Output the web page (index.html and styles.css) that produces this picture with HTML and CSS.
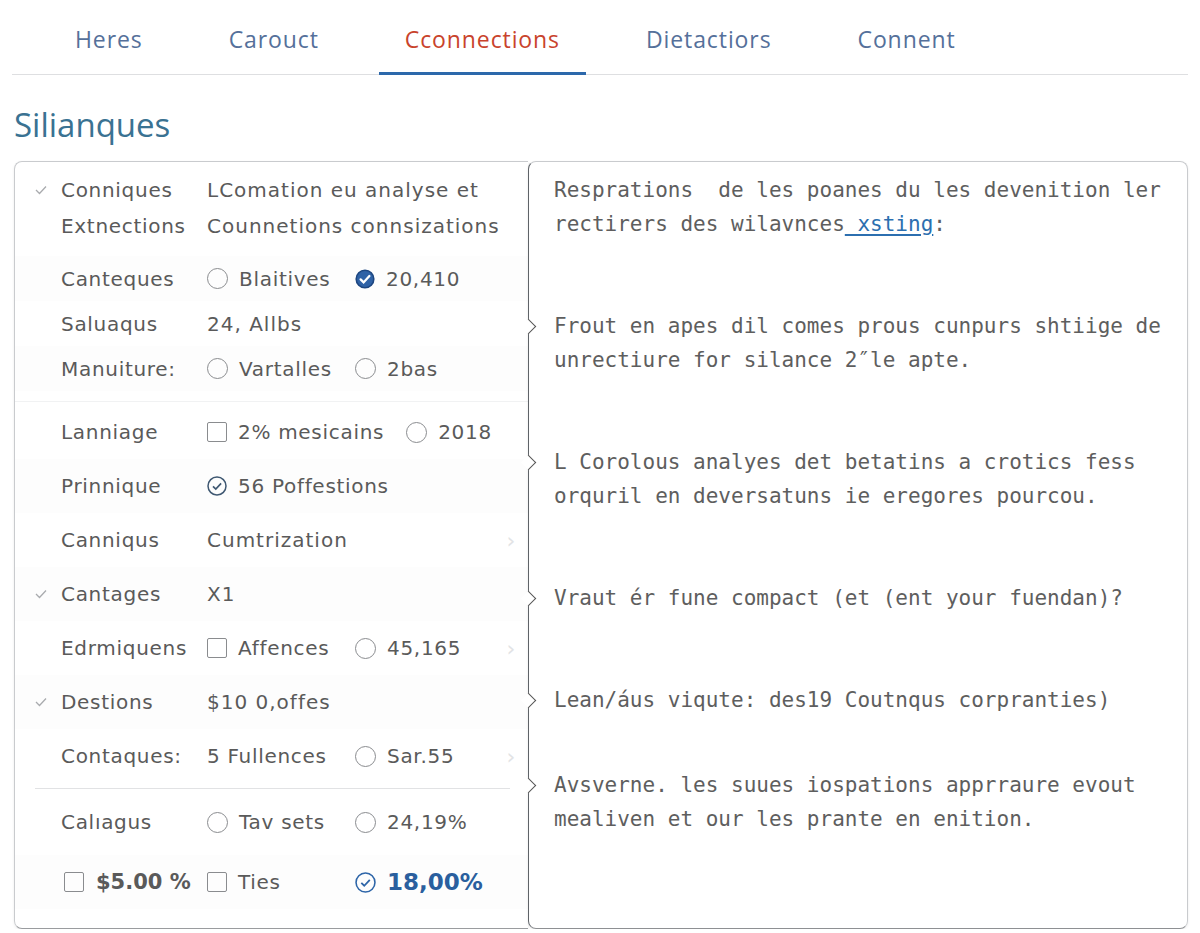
FILE: index.html
```html
<!DOCTYPE html>
<html lang="en">
<head>
    <meta charset="UTF-8">
    <meta name="viewport" content="width=device-width, initial-scale=1.0">
    <title>Silianques</title>
    <link rel="stylesheet" href="styles.css">
</head>
<body>
    <nav class="tabs">
        <a class="tab" href="#">Heres</a>
        <a class="tab" href="#">Carouct</a>
        <a class="tab active" href="#">Cconnections</a>
        <a class="tab" href="#">Dietactiors</a>
        <a class="tab" href="#">Connent</a>
    </nav>

    <main class="page">
        <h1 class="title">Silianques</h1>

        <div class="panels">
            <!-- left: settings list -->
            <section class="list">
                <div class="group first">
                    <div class="row two">
                        <span class="tick"><svg width="12" height="10" viewBox="0 0 12 10"><path d="M1 5l3.5 3.5L11 1.5"/></svg></span>
                        <span class="label">Conniques<br>Extnections</span>
                        <span class="value">LComation eu analyse et<br>Counnetions connsizations</span>
                    </div>
                    <div class="row">
                        <span class="tick"></span>
                        <span class="label">Canteques</span>
                        <span class="opts">
                            <span class="opt"><i class="radio"></i>Blaitives</span>
                            <span class="opt"><svg class="ico" width="20" height="20" viewBox="0 0 20 20"><circle cx="10" cy="10" r="8.8" fill="#2f62a6" stroke="#1d4680" stroke-width="1.6"/><path d="M5.6 10.4l3 3 5.8-6.4" stroke="#fff" stroke-width="2.3" fill="none" stroke-linecap="round"/></svg>20,410</span>
                        </span>
                    </div>
                    <div class="row">
                        <span class="tick"></span>
                        <span class="label">Saluaqus</span>
                        <span class="value">24, Allbs</span>
                    </div>
                    <div class="row">
                        <span class="tick"></span>
                        <span class="label">Manuiture:</span>
                        <span class="opts">
                            <span class="opt"><i class="radio"></i>Vartalles</span>
                            <span class="opt"><i class="radio"></i>2bas</span>
                        </span>
                    </div>
                </div>

                <div class="group">
                    <div class="row">
                        <span class="tick"></span>
                        <span class="label">Lanniage</span>
                        <span class="opts">
                            <span class="opt"><i class="box"></i>2% mesicains</span>
                            <span class="opt"><i class="radio"></i>2018</span>
                        </span>
                    </div>
                    <div class="row">
                        <span class="tick"></span>
                        <span class="label">Prinnique</span>
                        <span class="opts">
                            <span class="opt"><svg class="ico" width="20" height="20" viewBox="0 0 20 20"><circle cx="10" cy="10" r="9" fill="none" stroke="#3f5872" stroke-width="1.5"/><path d="M6 10.3l2.8 2.8 5.3-5.7" stroke="#3f5872" stroke-width="1.7" fill="none"/></svg>56 Poffestions</span>
                        </span>
                    </div>
                    <div class="row">
                        <span class="tick"></span>
                        <span class="label">Canniqus</span>
                        <span class="value">Cumtrization</span>
                        <span class="more">›</span>
                    </div>
                    <div class="row">
                        <span class="tick"><svg width="12" height="10" viewBox="0 0 12 10"><path d="M1 5l3.5 3.5L11 1.5"/></svg></span>
                        <span class="label">Cantages</span>
                        <span class="value">X1</span>
                    </div>
                    <div class="row">
                        <span class="tick"></span>
                        <span class="label">Edrmiquens</span>
                        <span class="opts">
                            <span class="opt"><i class="box"></i>Affences</span>
                            <span class="opt"><i class="radio"></i>45,165</span>
                        </span>
                        <span class="more">›</span>
                    </div>
                    <div class="row">
                        <span class="tick"><svg width="12" height="10" viewBox="0 0 12 10"><path d="M1 5l3.5 3.5L11 1.5"/></svg></span>
                        <span class="label">Destions</span>
                        <span class="value">$10 0,offes</span>
                    </div>
                    <div class="row">
                        <span class="tick"></span>
                        <span class="label">Contaques:</span>
                        <span class="opts">
                            <span class="opt">5 Fullences</span>
                            <span class="opt"><i class="radio"></i>Sar.55</span>
                        </span>
                        <span class="more">›</span>
                    </div>
                </div>

                <hr class="divider">

                <div class="group">
                    <div class="row">
                        <span class="tick"></span>
                        <span class="label">Calıagus</span>
                        <span class="opts">
                            <span class="opt"><i class="radio"></i>Tav sets</span>
                            <span class="opt"><i class="radio"></i>24,19%</span>
                        </span>
                    </div>
                    <div class="row totals">
                        <span class="tick"></span>
                        <span class="label"><span class="opt big"><i class="box"></i>$5.00 %</span></span>
                        <span class="opts">
                            <span class="opt"><i class="box"></i>Ties</span>
                            <span class="opt total"><svg class="ico" width="21" height="21" viewBox="0 0 20 20"><circle cx="10" cy="10" r="9" fill="none" stroke="#2d65a8" stroke-width="1.5"/><path d="M6 10.3l2.8 2.8 5.3-5.7" stroke="#2d65a8" stroke-width="1.7" fill="none"/></svg>18,00%</span>
                        </span>
                    </div>
                </div>
            </section>

            <!-- right: notes -->
            <section class="notes">
                <p class="note">Resprations  de les poanes du les devenition ler<br>rectirers des wilavnces<a href="#"> xsting</a>:</p>
                <p class="note mark">Frout en apes dil comes prous cunpurs shtiige de<br>unrectiure for silance 2″le apte.</p>
                <p class="note mark">L Corolous analyes det betatins a crotics fess<br>orquril en deversatuns ie eregores pourcou.</p>
                <p class="note mark">Vraut ér fune compact (et (ent your fuendan)?</p>
                <p class="note mark">Lean/áus viqute: des19 Coutnqus corpranties)</p>
                <p class="note mark near">Avsverne. les suues iospations apprraure evout<br>mealiven et our les prante en enition.</p>
            </section>
        </div>
    </main>
</body>
</html>
```

FILE: styles.css
```css
*{
    margin: 0;
    padding: 0;
    box-sizing: border-box;
}
body{
    background: #fff;
    font-family: "Open Sans", "DejaVu Sans", sans-serif;
    color: #555;
}

/* top tabs */
.tabs{
    display: flex;
    gap: 34px;
    margin: 0 12px;
    padding-left: 37px;
    border-bottom: 1px solid #dedfe1;
}
.tab{
    padding: 24px 26px 18px;
    margin-bottom: -1px;
    font-size: 23px;
    line-height: 30px;
    letter-spacing: 0.9px;
    color: #55709a;
    text-decoration: none;
    border-bottom: 3px solid transparent;
}
.tab.active{
    color: #c9432c;
    border-bottom-color: #2c68ab;
}

.page{
    padding: 0 12px 0 14px;
}
.title{
    margin: 30px 0 16px;
    font-size: 33px;
    line-height: 40px;
    font-weight: 400;
    color: #3a7292;
}

.panels{
    display: grid;
    grid-template-columns: 514px 1fr;
    height: 768px;
}

/* left list */
.list{
    border: 1px solid #c9cbce;
    border-right: none;
    border-bottom-color: #9a9c9f;
    border-radius: 8px 0 0 8px;
    font-family: "DejaVu Sans", sans-serif;
    font-size: 20px;
    letter-spacing: 0.7px;
    color: #5a5a5a;
    box-shadow: 0 1px 3px rgba(0,0,0,0.08);
}
.group{
    padding: 3px 0 5px;
}
.group.first{
    padding: 10px 0 10px;
    border-bottom: 1px solid #f1f2f3;
}
.row{
    display: flex;
    align-items: center;
    height: 54px;
    padding: 0 12px 0 20px;
}
.first .row{
    height: 45px;
}
.first .row.two{
    height: auto;
    line-height: 36px;
    margin-bottom: 12px;
    align-items: flex-start;
}
.row:nth-child(even){
    background: #fdfdfd;
}
.tick{
    width: 26px;
    flex-shrink: 0;
    display: flex;
}
.two .tick{
    padding-top: 13px;
}
.tick svg{
    fill: none;
    stroke: #a9abae;
    stroke-width: 1.3;
}
.label{
    width: 146px;
    flex-shrink: 0;
}
.value{
    letter-spacing: 1px;
}
.opts{
    display: flex;
    align-items: center;
    gap: 22px;
}
.opt{
    display: flex;
    align-items: center;
    gap: 11px;
}
.opts .opt:first-child{
    min-width: 126px;
}
.radio{
    width: 21px;
    height: 21px;
    border: 1.5px solid #8a8c8f;
    border-radius: 50%;
}
.box{
    width: 20px;
    height: 20px;
    border: 1.5px solid #8a8c8f;
    border-radius: 2px;
}
.ico{
    flex-shrink: 0;
}
.more{
    margin-left: auto;
    font-size: 22px;
    color: #e2e3e5;
}
.divider{
    border: none;
    border-top: 1px solid #e1e2e4;
    margin: 0 18px 0 20px;
}
.group:last-child{
    padding-top: 6px;
}
.totals{
    margin-top: 6px;
}
.totals .label{
    padding-left: 3px;
}
.opt.big{
    font-size: 21px;
    font-weight: 600;
    gap: 12px;
    letter-spacing: 0;
}
.opt.total{
    font-size: 23px;
    font-weight: 700;
    color: #2a5f9e;
    letter-spacing: 0;
}

/* right notes */
.notes{
    border: 1px solid #c9cbce;
    border-left-color: #5f6368;
    border-bottom-color: #8e9093;
    border-radius: 8px;
    padding: 11px 20px 0 25px;
    font-family: "DejaVu Sans Mono", monospace;
    font-size: 21px;
    line-height: 34px;
    color: #5e5e5e;
    box-shadow: 0 1px 3px rgba(0,0,0,0.08);
}
.note{
    position: relative;
    white-space: pre;
}
.note + .note{
    margin-top: 68px;
}
.note.near{
    margin-top: 51px;
}
.note a{
    color: #2c6fb0;
    text-decoration: underline;
    text-underline-offset: 3px;
}
/* brace notch on the left edge */
.note.mark::before{
    content: "";
    position: absolute;
    left: -31px;
    top: 12px;
    width: 10px;
    height: 10px;
    border-top: 1.5px solid #555;
    border-right: 1.5px solid #555;
    background: #fff;
    transform: rotate(45deg);
}
```
